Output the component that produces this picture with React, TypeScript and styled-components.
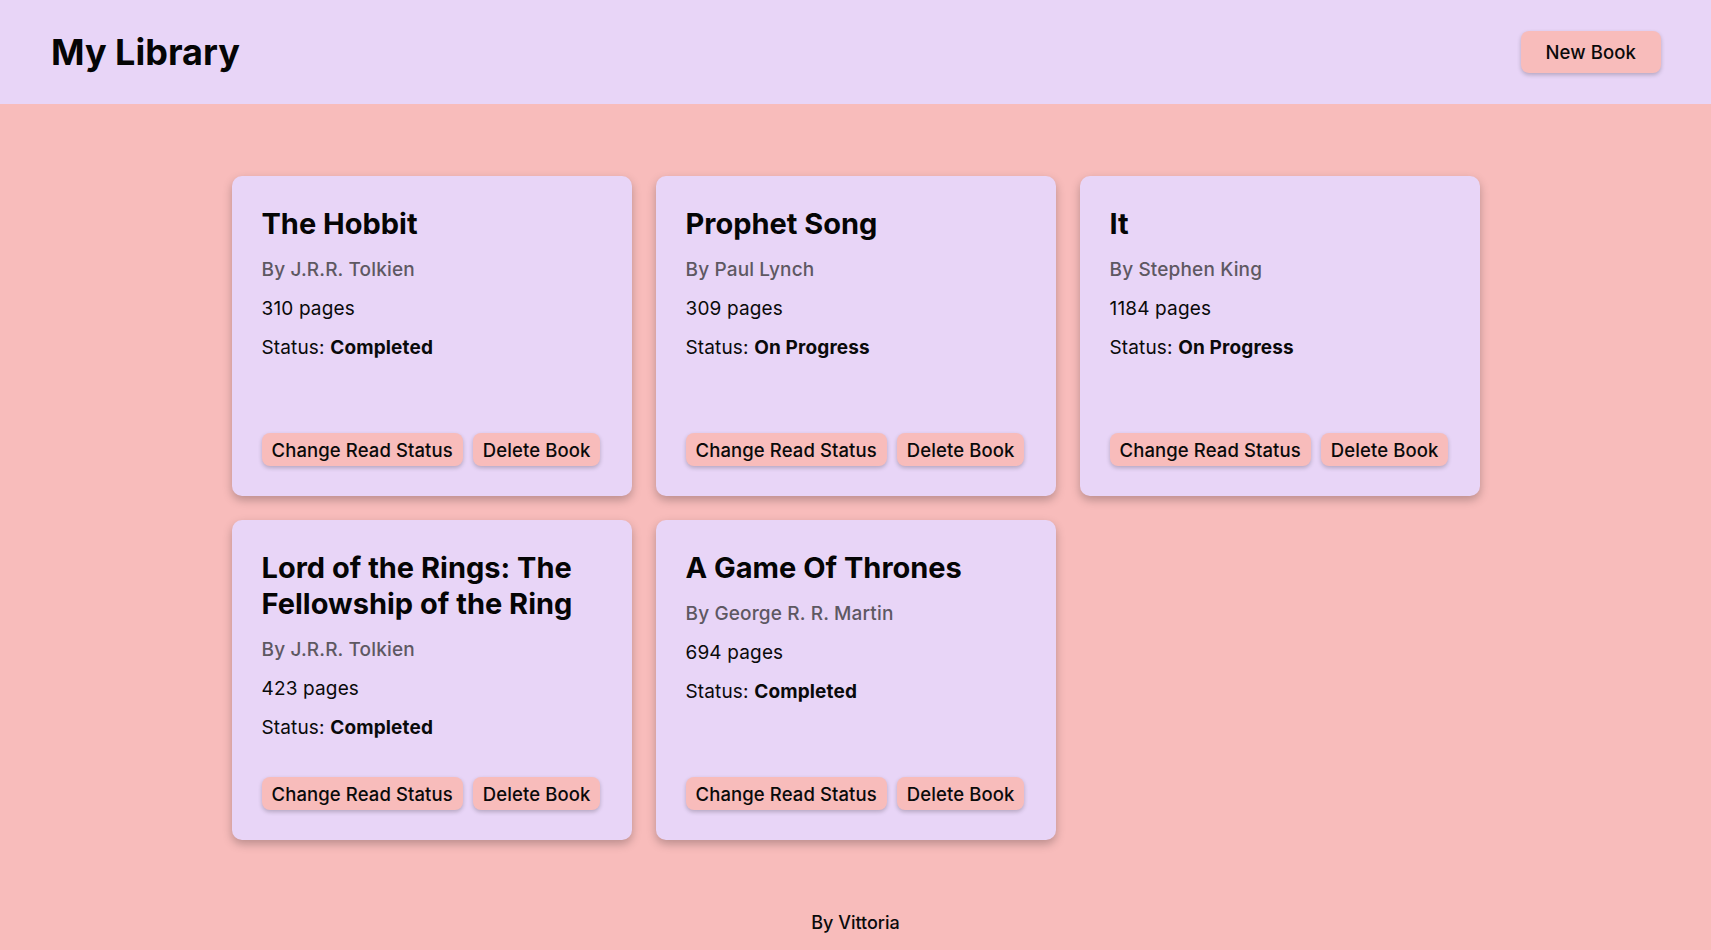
import React from "react";
import styled, { createGlobalStyle } from "styled-components";

const GlobalStyle = createGlobalStyle`
  * { box-sizing: border-box; }
  html, body { margin: 0; padding: 0; }
  body {
    font-family: Inter, "Noto Sans", Arial, sans-serif;
    color: #0a0a0a;
    background: #f8bcbb;
  }
`;

const Page = styled.div`
  min-height: 100vh;
  display: flex;
  flex-direction: column;
  background: #f8bcbb;
`;

const Header = styled.header`
  height: 104px;
  background: #e8d5f7;
  display: flex;
  align-items: center;
  justify-content: space-between;
  padding: 0 50px 0 51px;
`;

const Title = styled.h1`
  margin: 0;
  font-size: 36px;
  font-weight: 700;
  letter-spacing: 0;
  color: #050505;
`;

const PinkButton = styled.button<{ $size?: "lg" | "sm" }>`
  font-family: inherit;
  border: none;
  cursor: pointer;
  background: #f8bcbb;
  color: #0a0a0a;
  font-weight: 500;
  border-radius: 8px;
  font-size: 18.5px;
  letter-spacing: 0.1px;
  height: ${(p) => (p.$size === "lg" ? "42px" : "33px")};
  padding: ${(p) => (p.$size === "lg" ? "0 25px" : "0 10px")};
  box-shadow: 0 2px 4px rgba(0, 0, 0, 0.22);
  white-space: nowrap;
`;

const Main = styled.main`
  flex: 1;
  padding: 72px 0 54px;
  display: flex;
  justify-content: center;
`;

const Grid = styled.div`
  display: grid;
  grid-template-columns: repeat(3, 400px);
  grid-auto-rows: 320px;
  gap: 24px;
`;

const Card = styled.article`
  background: #e8d5f7;
  border-radius: 10px;
  box-shadow: 0 4px 10px rgba(0, 0, 0, 0.25);
  padding: 30px;
  display: flex;
  flex-direction: column;
`;

const BookTitle = styled.h2`
  margin: 0 0 16px;
  font-size: 29px;
  line-height: 36px;
  font-weight: 700;
  letter-spacing: 0;
  color: #050505;
`;

const Line = styled.p<{ $muted?: boolean }>`
  margin: 0 0 15px;
  font-size: 19px;
  line-height: 24px;
  letter-spacing: 0.15px;
  font-weight: ${(p) => (p.$muted ? 500 : 400)};
  color: ${(p) => (p.$muted ? "#5e5862" : "#0a0a0a")};
`;

const Strong = styled.strong`
  font-weight: 700;
`;

const Actions = styled.div`
  margin-top: auto;
  display: flex;
  gap: 10px;
`;

const Footer = styled.footer`
  padding: 16px 0;
  text-align: center;
  font-size: 18px;
  line-height: 22px;
  font-weight: 500;
`;

const books = [
  { title: "The Hobbit", author: "J.R.R. Tolkien", pages: 310, status: "Completed" },
  { title: "Prophet Song", author: "Paul Lynch", pages: 309, status: "On Progress" },
  { title: "It", author: "Stephen King", pages: 1184, status: "On Progress" },
  {
    title: "Lord of the Rings: The Fellowship of the Ring",
    author: "J.R.R. Tolkien",
    pages: 423,
    status: "Completed",
  },
  { title: "A Game Of Thrones", author: "George R. R. Martin", pages: 694, status: "Completed" },
];

export default function App() {
  return (
    <Page>
      <GlobalStyle />
      <Header>
        <Title>My Library</Title>
        <PinkButton $size="lg">New Book</PinkButton>
      </Header>
      <Main>
        <Grid>
          {books.map((b) => (
            <Card key={b.title}>
              <BookTitle>{b.title}</BookTitle>
              <Line $muted>By {b.author}</Line>
              <Line>{b.pages} pages</Line>
              <Line>
                Status: <Strong>{b.status}</Strong>
              </Line>
              <Actions>
                <PinkButton $size="sm">Change Read Status</PinkButton>
                <PinkButton $size="sm">Delete Book</PinkButton>
              </Actions>
            </Card>
          ))}
        </Grid>
      </Main>
      <Footer>By Vittoria</Footer>
    </Page>
  );
}
